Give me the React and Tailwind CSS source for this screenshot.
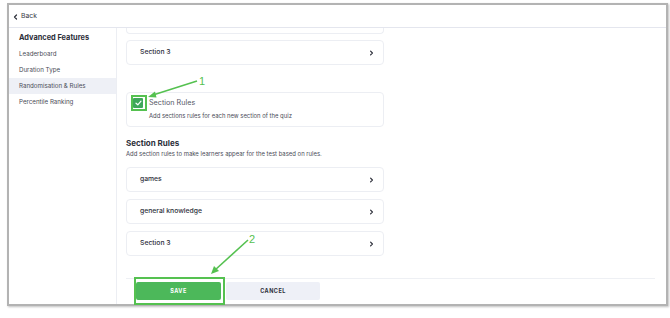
import React from "react";

const Chevron = () => (
  <svg width="5" height="6" viewBox="0 0 5 6" className="shrink-0">
    <path d="M1.6 1.2 L3.4 3 L1.6 4.8" fill="none" stroke="#2d2f3a" strokeWidth="1.2" strokeLinecap="round" strokeLinejoin="round" />
  </svg>
);

const RowCard = ({ label, className = "" }) => (
  <div className={`flex h-[25px] items-center justify-between rounded-[4px] border border-[#eceef3] bg-white pl-[13px] pr-[9px] ${className}`}>
    <span className="text-[6.8px] font-medium text-[#2d2f3a]">{label}</span>
    <Chevron />
  </div>
);

export default function App() {
  return (
    <div className="relative h-[318px] w-[670px] overflow-hidden bg-white" style={{ fontFamily: "Inter, 'Noto Sans', sans-serif" }}>
      <div className="ml-[7px] mt-[3px] flex h-[303px] w-[661px] flex-col border-2 border-[#b3b3b3] bg-white shadow-[1px_1px_2px_rgba(0,0,0,0.25)]">
        {/* header */}
        <div className="flex h-[23px] shrink-0 items-center gap-[3px] border-b border-[#e4e6ee] pl-[4px] pt-[1px]">
          <svg width="5" height="6" viewBox="0 0 5 6">
            <path d="M3.5 1 L1.5 3 L3.5 5" fill="none" stroke="#2d2f3a" strokeWidth="1.2" strokeLinecap="round" strokeLinejoin="round" />
          </svg>
          <span className="text-[6.8px] text-[#3a3c47]">Back</span>
        </div>
        <div className="flex min-h-0 flex-1">
          {/* sidebar */}
          <div className="w-[108px] shrink-0 border-r border-[#eceef3] pt-[5px]">
            <div className="pl-[10px] text-[7.4px] font-bold leading-[10px] text-[#2d2f3a]">Advanced Features</div>
            <div className="mt-[3px] flex flex-col text-[6.2px] text-[#4a4c57]">
              <div className="flex h-[16px] items-center pl-[10px]">Leaderboard</div>
              <div className="flex h-[16px] items-center pl-[10px]">Duration Type</div>
              <div className="flex h-[16px] items-center bg-[#eef0f6] pl-[10px]">Randomisation &amp; Rules</div>
              <div className="flex h-[16px] items-center pl-[10px]">Percentile Ranking</div>
            </div>
          </div>
          {/* content */}
          <div className="flex min-w-0 flex-1 flex-col pl-[9px] pr-[11px]">
            <div className="w-[258px]">
              <div className="h-[6px] rounded-b-[4px] border-x border-b border-[#eceef3]" />
              <RowCard label="Section 3" className="mt-[6px]" />
              <div className="mt-[27px] h-[35px] rounded-[4px] border border-[#eceef3] pl-[6px] pt-[5px]">
                <div className="flex items-center gap-[6px]">
                  <div className="flex h-[10px] w-[10px] items-center justify-center rounded-[1px] bg-[#3fa75a]">
                    <svg width="7" height="6" viewBox="0 0 7 6">
                      <path d="M1 3.2 L2.8 4.8 L6 1.2" fill="none" stroke="white" strokeWidth="1.2" strokeLinecap="round" strokeLinejoin="round" />
                    </svg>
                  </div>
                  <span className="text-[7.2px] text-[#555866]">Section Rules</span>
                </div>
                <div className="mt-[3px] pl-[16px] text-[5.9px] text-[#4a4c57]">Add sections rules for each new section of the quiz</div>
              </div>
              <div className="mt-[11px] text-[8px] font-bold leading-[10px] text-[#2d2f3a]">Section Rules</div>
              <div className="mt-[2px] text-[5.95px] leading-[8px] text-[#4a4c57]">Add section rules to make learners appear for the test based on rules.</div>
              <RowCard label="games" className="mt-[9px]" />
              <RowCard label="general knowledge" className="mt-[7px]" />
              <RowCard label="Section 3" className="mt-[7px]" />
            </div>
            <div className="mt-[22px] flex gap-[5px] border-t border-[#eef0f4] pl-[10px] pt-[3px]">
              <div className="flex h-[18px] w-[85px] items-center justify-center rounded-[2px] bg-[#4cb85a] text-[5.5px] font-bold tracking-[0.5px] text-white">SAVE</div>
              <div className="flex h-[18px] w-[94px] items-center justify-center rounded-[2px] bg-[#eef0f7] text-[5.5px] font-bold tracking-[0.5px] text-[#2d2f3a]">CANCEL</div>
            </div>
          </div>
        </div>
      </div>
      {/* annotations */}
      <svg className="pointer-events-none absolute left-0 top-0" width="670" height="318" viewBox="0 0 670 318">
        <rect x="132" y="96" width="14" height="14" fill="none" stroke="#55c150" strokeWidth="2" />
        <rect x="135" y="278" width="89" height="26" fill="none" stroke="#55c150" strokeWidth="2" />
        <line x1="197" y1="81" x2="153" y2="95" stroke="#55c150" strokeWidth="1.6" />
        <path d="M148 97 L155 91.5 L156.5 97.5 Z" fill="#55c150" />
        <line x1="248" y1="240" x2="215" y2="270" stroke="#55c150" strokeWidth="1.6" />
        <path d="M211 274 L214 266 L219 271 Z" fill="#55c150" />
        <text x="199" y="85" fontSize="11" fill="#55c150" fontFamily="'Liberation Sans', sans-serif">1</text>
        <text x="249" y="243" fontSize="11" fill="#55c150" fontFamily="'Liberation Sans', sans-serif">2</text>
      </svg>
    </div>
  );
}
